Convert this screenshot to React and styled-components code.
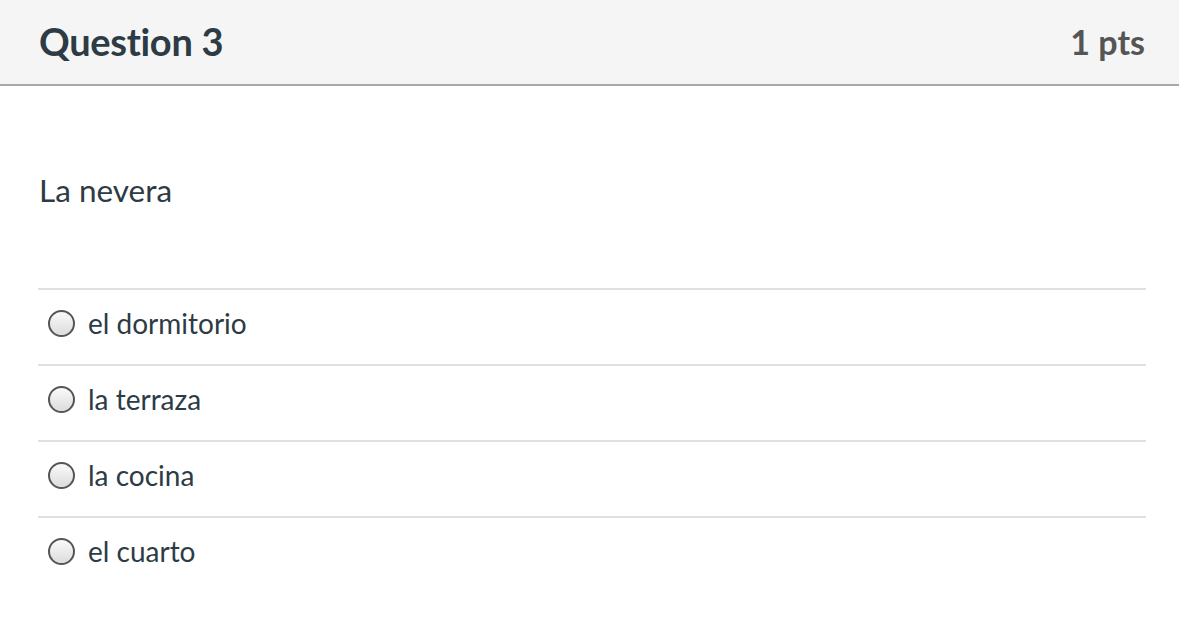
import React from 'react';
import styled, { createGlobalStyle } from 'styled-components';

const GlobalStyle = createGlobalStyle`
  body {
    margin: 0;
    background: #fff;
    font-family: Lato, "Open Sans", sans-serif;
  }
`;

const Card = styled.div`
  width: 1179px;
`;

const Header = styled.div`
  display: flex;
  justify-content: space-between;
  align-items: center;
  height: 86px;
  padding: 0 34px 2px 39px;
  box-sizing: border-box;
  background: #f5f5f5;
  border-bottom: 2px solid #a8a8a8;
`;

const Title = styled.h2`
  margin: 0;
  font-size: 38px;
  font-weight: 700;
  color: #2d3b45;
  letter-spacing: -0.3px;
`;

const Points = styled.div`
  font-size: 34px;
  font-weight: 700;
  color: #555;
`;

const Body = styled.div`
  padding: 86px 33px 0 38px;
`;

const Prompt = styled.p`
  margin: 0 0 80px 1px;
  font-size: 31.5px;
  color: #2d3b45;
  line-height: 36px;
`;

const Answers = styled.div`
  display: flex;
  flex-direction: column;
`;

const Answer = styled.label`
  display: flex;
  align-items: center;
  gap: 13px;
  height: 76px;
  padding: 0 0 8px 10px;
  box-sizing: border-box;
  border-top: 2px solid #e0e0e0;
  font-size: 28px;
  color: #2d3b45;
`;

const Radio = styled.span`
  width: 23px;
  height: 23px;
  border-radius: 50%;
  border: 2px solid #555;
  background: linear-gradient(180deg, #fafafa 0%, #dcdcdc 100%);
  flex-shrink: 0;
`;

const answers = ['el dormitorio', 'la terraza', 'la cocina', 'el cuarto'];

export default function App() {
  return (
    <Card>
      <GlobalStyle />
      <Header>
        <Title>Question 3</Title>
        <Points>1 pts</Points>
      </Header>
      <Body>
        <Prompt>La nevera</Prompt>
        <Answers>
          {answers.map((a) => (
            <Answer key={a}>
              <Radio />
              {a}
            </Answer>
          ))}
        </Answers>
      </Body>
    </Card>
  );
}
